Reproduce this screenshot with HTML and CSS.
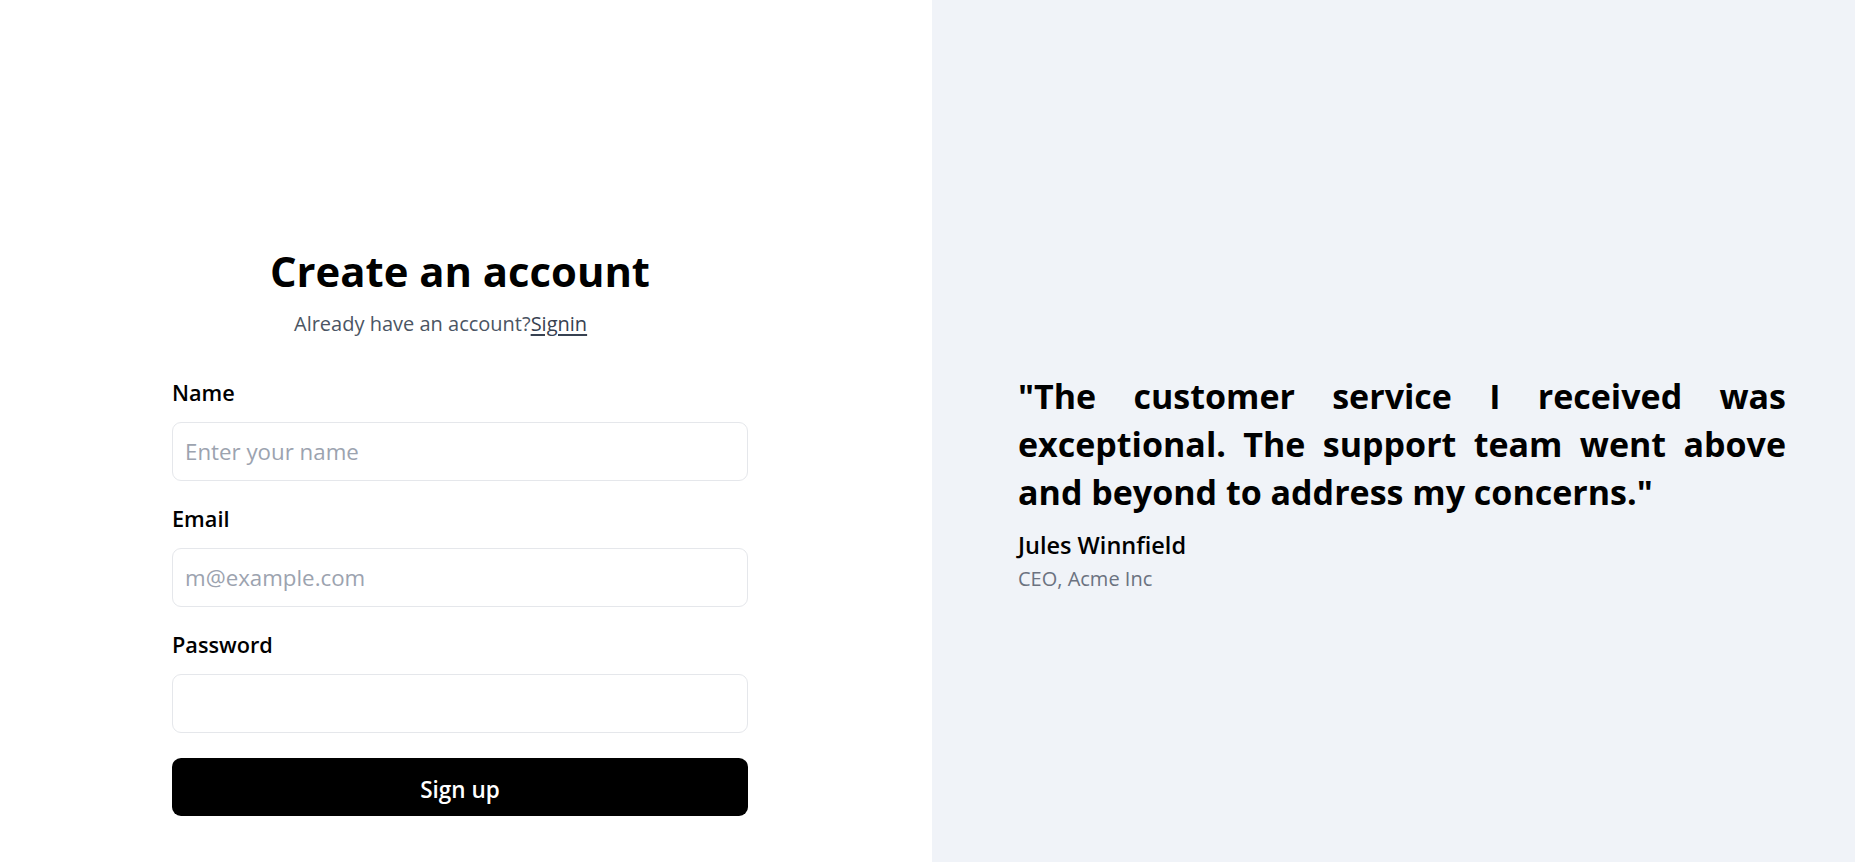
FILE: index.html
```html
<!DOCTYPE html>
<html lang="en">
<head>
<meta charset="utf-8">
<title>Create an account</title>
<link rel="stylesheet" href="styles.css">
</head>
<body>
<div class="page">
  <main class="left">
    <div class="form">
      <h1 class="title">Create an account</h1>
      <p class="subtitle">Already have an account?<a class="link" href="#">Signin</a></p>
      <div class="fields">
        <div class="field">
          <label class="label" for="name">Name</label>
          <input class="input" id="name" type="text" placeholder="Enter your name">
        </div>
        <div class="field">
          <label class="label" for="email">Email</label>
          <input class="input" id="email" type="email" placeholder="m@example.com">
        </div>
        <div class="field">
          <label class="label" for="password">Password</label>
          <input class="input" id="password" type="password">
        </div>
      </div>
      <button class="button" type="button">Sign up</button>
    </div>
  </main>
  <aside class="right">
    <blockquote class="testimonial">
      <p class="quote">"The customer service I received was exceptional. The support team went above and beyond to address my concerns."</p>
      <p class="author">Jules Winnfield</p>
      <p class="role">CEO, Acme Inc</p>
    </blockquote>
  </aside>
</div>
</body>
</html>
```

FILE: styles.css
```css
html, body {
  margin: 0;
  padding: 0;
}

body {
  font-family: "Open Sans", "Noto Sans", sans-serif;
  color: #000;
  background: #ffffff;
}

.page {
  display: grid;
  grid-template-columns: 932px 1fr;
  height: 100vh;
  min-height: 862px;
}

.left {
  background: #ffffff;
  padding-top: 245px;
  padding-left: 172px;
}

.form {
  width: 576px;
  display: flex;
  flex-direction: column;
}

.title {
  margin: 0;
  font-size: 41.8px;
  line-height: 51px;
  font-weight: 700;
  text-align: center;
  color: #000;
}

.subtitle {
  margin: 12.5px 0 0 122px;
  font-size: 20px;
  line-height: 30px;
  color: #4b5563;
}

.link {
  color: #374151;
  text-decoration: underline;
  text-underline-offset: 3px;
}

.fields {
  margin-top: 39px;
  display: flex;
  flex-direction: column;
  gap: 23px;
}

.field {
  display: flex;
  flex-direction: column;
  gap: 14px;
}

.label {
  font-size: 21.7px;
  line-height: 30px;
  font-weight: 600;
  color: #000;
}

.input {
  box-sizing: border-box;
  width: 100%;
  height: 59px;
  margin: 0;
  padding: 0 12px;
  border: 1px solid #e5e7eb;
  border-radius: 9px;
  background: #ffffff;
  font-family: "Open Sans", "Noto Sans", sans-serif;
  font-size: 22.3px;
  color: #111827;
  outline: none;
}

.input::placeholder {
  color: #9ca3af;
}

.button {
  margin-top: 25px;
  height: 58.5px;
  width: 100%;
  padding: 5px 0 0;
  border: none;
  border-radius: 9px;
  background: #000;
  color: #fff;
  font-family: "Open Sans", "Noto Sans", sans-serif;
  font-size: 22.5px;
  font-weight: 600;
  display: flex;
  align-items: center;
  justify-content: center;
}

.right {
  background: #f0f3f8;
  padding-top: 372px;
  padding-left: 86px;
}

.testimonial {
  margin: 0;
  width: 768px;
}

.quote {
  margin: 0;
  font-size: 34px;
  line-height: 48px;
  font-weight: 700;
  text-align: justify;
  color: #000;
}

.author {
  margin: 13.8px 0 0;
  font-size: 23.5px;
  line-height: 30px;
  font-weight: 600;
  color: #000;
}

.role {
  margin: 4.6px 0 0;
  font-size: 20px;
  line-height: 30px;
  color: #6b7280;
}
```
